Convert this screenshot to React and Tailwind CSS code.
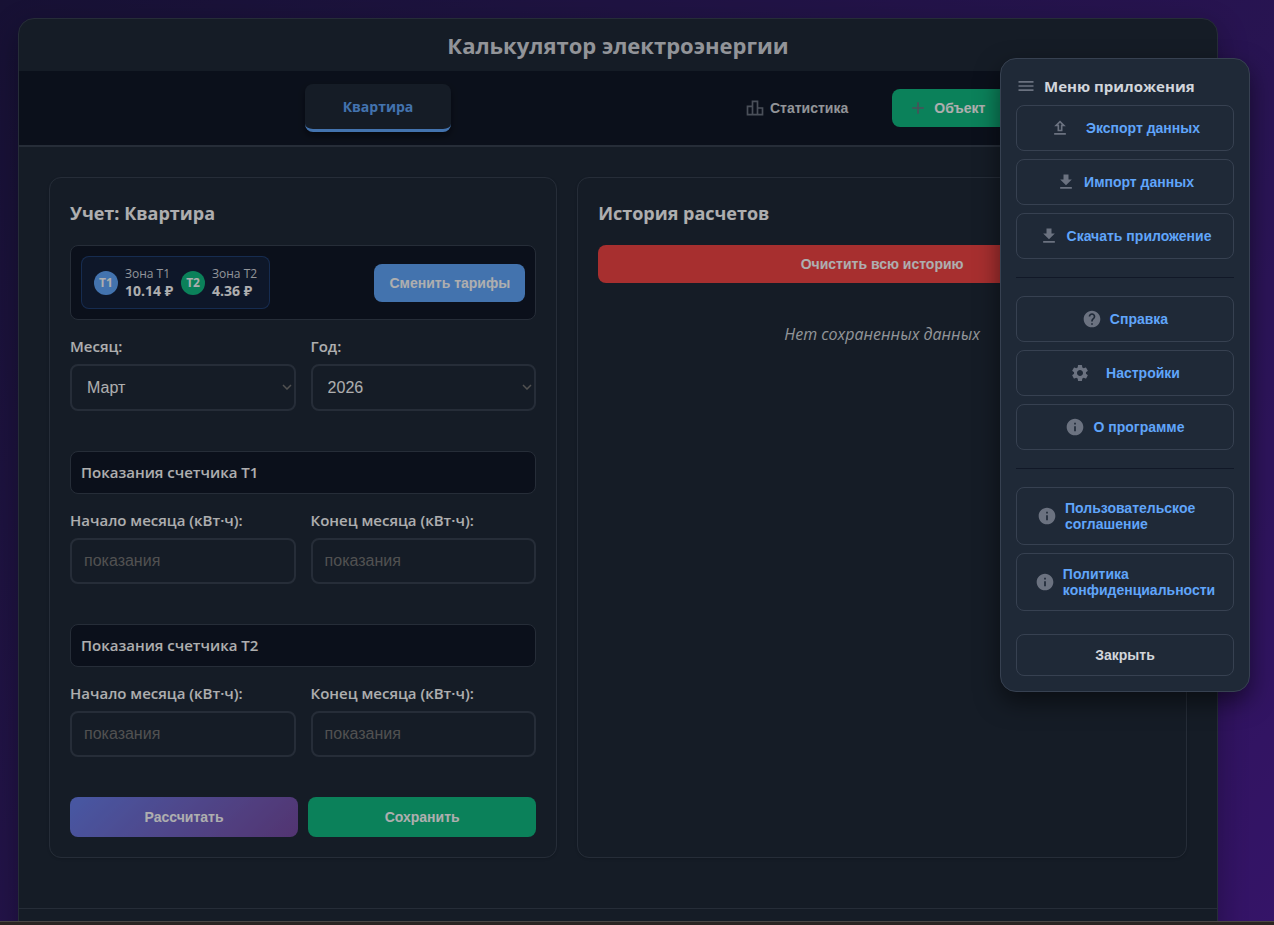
import { useState } from "react";
import {
  MdAdd,
  MdDownload,
  MdHelp,
  MdInfo,
  MdMenu,
  MdOutlineLeaderboard,
  MdOutlineUpload,
  MdSettings,
} from "react-icons/md";

const MONTHS = [
  "Январь", "Февраль", "Март", "Апрель", "Май", "Июнь",
  "Июль", "Август", "Сентябрь", "Октябрь", "Ноябрь", "Декабрь",
];
const YEARS = ["2024", "2025", "2026", "2027"];

const ZONES = [
  { id: "T1", price: "10.14 ₽", badge: "bg-[#60a5fa]" },
  { id: "T2", price: "4.36 ₽", badge: "bg-[#10b981]" },
];

const MENU = [
  [
    { label: "Экспорт данных", icon: MdOutlineUpload, wide: true },
    { label: "Импорт данных", icon: MdDownload },
    { label: "Скачать приложение", icon: MdDownload },
  ],
  [
    { label: "Справка", icon: MdHelp },
    { label: "Настройки", icon: MdSettings, wide: true },
    { label: "О программе", icon: MdInfo },
  ],
  [
    { label: "Пользовательское соглашение", icon: MdInfo },
    { label: "Политика конфиденциальности", icon: MdInfo },
  ],
];

const buttonText = "font-['Liberation_Sans',sans-serif] text-sm font-bold";

function Field({ label, htmlFor, children }) {
  return (
    <div className="flex min-w-0 flex-1 flex-col gap-[7px]">
      <label htmlFor={htmlFor} className="text-[15px] leading-[22px] font-semibold whitespace-nowrap text-[#f9fafb]">
        {label}
      </label>
      {children}
    </div>
  );
}

function Select({ id, value, onChange, options }) {
  return (
    <div className="relative">
      <select
        id={id}
        value={value}
        onChange={(e) => onChange(e.target.value)}
        className="block h-[47px] w-full appearance-none rounded-lg border-2 border-[#374151] bg-[#1f2937] px-[15px] font-['Liberation_Sans',sans-serif] text-base text-[#f9fafb]"
      >
        {options.map((o) => (
          <option key={o}>{o}</option>
        ))}
      </select>
      <svg
        viewBox="0 0 10 6"
        className="pointer-events-none absolute top-5 right-1 h-[6px] w-[10px] fill-none stroke-[#757575]"
        strokeWidth="1.5"
      >
        <path d="M1 1l4 4 4-4" />
      </svg>
    </div>
  );
}

function Meter({ zone }) {
  return (
    <section className="mt-10">
      <h3 className="rounded-lg border border-[#374151] bg-[#111827] px-[10px] py-2 text-[15px] leading-[25px] font-semibold text-[#f9fafb]">
        Показания счетчика {zone}
      </h3>
      <div className="mt-[15px] flex gap-[15px]">
        {["Начало", "Конец"].map((edge) => (
          <Field key={edge} label={`${edge} месяца (кВт·ч):`} htmlFor={`${zone}-${edge}`}>
            <input
              id={`${zone}-${edge}`}
              inputMode="numeric"
              placeholder="показания"
              className="h-[46px] w-full rounded-lg border-2 border-[#374151] bg-[#1f2937] px-3 font-['Liberation_Sans',sans-serif] text-base text-[#f9fafb] placeholder:text-[#757575]"
            />
          </Field>
        ))}
      </div>
    </section>
  );
}

function MenuItem({ label, icon: Icon, wide }) {
  return (
    <button
      className={`${buttonText} flex items-center justify-center rounded-lg border border-[#374151] px-5 py-3 text-left leading-4 text-[#60a5fa] ${wide ? "gap-4" : "gap-2"}`}
    >
      <Icon className="size-5 shrink-0 text-[#6b7280]" />
      <span>{label}</span>
    </button>
  );
}

function AppMenu({ onClose }) {
  return (
    <aside className="absolute top-[58px] right-6 w-[250px] rounded-2xl border border-[#374151] bg-[#1f2937] p-[15px] shadow-[0_10px_25px_rgba(0,0,0,0.5)]">
      <h2 className="mb-[7px] flex items-center gap-2 text-[15px] leading-6 font-bold text-[#d1d5db]">
        <MdMenu className="size-5 text-[#6b7280]" />
        Меню приложения
      </h2>
      {MENU.map((group, i) => (
        <div key={i}>
          {i > 0 && <hr className="my-[18px] border-[#111827]" />}
          <div className="flex flex-col gap-2">
            {group.map((item) => (
              <MenuItem key={item.label} {...item} />
            ))}
          </div>
        </div>
      ))}
      <button
        onClick={onClose}
        className={`${buttonText} mt-[23px] h-[42px] w-full rounded-lg border border-[#374151] text-[#d1d5db]`}
      >
        Закрыть
      </button>
    </aside>
  );
}

export default function App() {
  const [month, setMonth] = useState("Март");
  const [year, setYear] = useState("2026");
  const [menuOpen, setMenuOpen] = useState(true);

  return (
    <div className="relative flex h-screen flex-col overflow-hidden bg-linear-135 from-[#21194b] to-[#4c1d95] font-['Open_Sans','Noto_Sans',sans-serif]">
      <div className="min-h-0 flex-1 overflow-hidden pt-[18px] pr-14 pl-[18px]">
        <main className="max-w-[1200px] overflow-hidden rounded-2xl border border-[#374151] bg-[#1f2937] shadow-[0_10px_30px_rgba(0,0,0,0.3)]">
          <header className="py-2 text-center">
            <h1 className="text-[22px] leading-9 font-bold text-[#d1d5db]">Калькулятор электроэнергии</h1>
          </header>

          {/* Object tabs and actions */}
          <nav className="flex h-[76px] items-center border-b-2 border-[#374151] bg-[#111827] px-5">
            <div className="flex flex-1 justify-center">
              <button className="h-12 rounded-lg border-b-3 border-[#60a5fa] bg-[#1f2937] px-[38px] text-sm font-bold text-[#60a5fa] shadow-[0_4px_6px_rgba(0,0,0,0.4)]">
                Квартира
              </button>
            </div>
            <div className="flex w-[480px] gap-4">
              <button className={`${buttonText} flex h-[38px] items-center gap-[5px] px-7 text-[#d1d5db]`}>
                <MdOutlineLeaderboard className="size-5 text-[#6b7280]" />
                Статистика
              </button>
              <button className={`${buttonText} flex h-[38px] items-center gap-[6px] rounded-lg bg-[#10b981] px-4 pr-7 text-[#f9fafb]`}>
                <MdAdd className="size-5 text-[#6b7280]" />
                Объект
              </button>
            </div>
          </nav>

          <div className="grid grid-cols-[1fr_1.2fr] gap-5 p-[30px]">
            {/* Calculator */}
            <section className="rounded-xl border border-[#374151] p-5 shadow-sm">
              <h2 className="mb-[17px] text-lg leading-[30px] font-bold text-[#f9fafb]">Учет: Квартира</h2>

              <div className="flex items-center justify-between rounded-lg border border-[#374151] bg-[#111827] p-[10px]">
                <div className="flex h-[53px] items-center gap-2 rounded-lg border border-[#3b82f6]/30 bg-[#3b82f6]/10 px-3">
                  {ZONES.map((z) => (
                    <div key={z.id} className="flex items-center gap-[7px]">
                      <span className={`flex size-6 items-center justify-center rounded-full text-xs font-bold text-[#f9fafb] ${z.badge}`}>
                        {z.id}
                      </span>
                      <div className="whitespace-nowrap">
                        <p className="text-xs leading-[17px] text-[#d1d5db]">Зона {z.id}</p>
                        <p className="text-sm leading-[18px] font-bold text-[#f9fafb]">{z.price}</p>
                      </div>
                    </div>
                  ))}
                </div>
                <button className={`${buttonText} h-[38px] rounded-lg bg-[#60a5fa] px-[15px] text-[#f9fafb]`}>
                  Сменить тарифы
                </button>
              </div>

              <div className="mt-[15px] flex gap-[15px]">
                <Field label="Месяц:" htmlFor="month">
                  <Select id="month" value={month} onChange={setMonth} options={MONTHS} />
                </Field>
                <Field label="Год:" htmlFor="year">
                  <Select id="year" value={year} onChange={setYear} options={YEARS} />
                </Field>
              </div>

              <Meter zone="T1" />
              <Meter zone="T2" />

              <div className="mt-10 flex gap-[10px]">
                <button className={`${buttonText} h-10 flex-1 rounded-lg bg-linear-135 from-[#667eea] to-[#764ba2] text-[#f9fafb]`}>
                  Рассчитать
                </button>
                <button className={`${buttonText} h-10 flex-1 rounded-lg bg-[#10b981] text-[#f9fafb]`}>
                  Сохранить
                </button>
              </div>
            </section>

            {/* History */}
            <section className="rounded-xl border border-[#374151] p-5 shadow-sm">
              <h2 className="mb-[17px] text-lg leading-[30px] font-bold text-[#f9fafb]">История расчетов</h2>
              <button className={`${buttonText} h-[38px] w-full rounded-lg bg-[#ef4444] text-[#f9fafb]`}>
                Очистить всю историю
              </button>
              <p className="mt-10 text-center text-base leading-[22px] text-[#d1d5db] italic">Нет сохраненных данных</p>
            </section>
          </div>

          <footer className="mt-5 h-20 border-t border-[#374151]" />
        </main>
      </div>

      {menuOpen && (
        <>
          <div className="absolute inset-0 bg-black/30" />
          <AppMenu onClose={() => setMenuOpen(false)} />
        </>
      )}

      <div className="relative h-1 shrink-0 border-t border-[#4a4644] bg-[#2a2422]" />
    </div>
  );
}
